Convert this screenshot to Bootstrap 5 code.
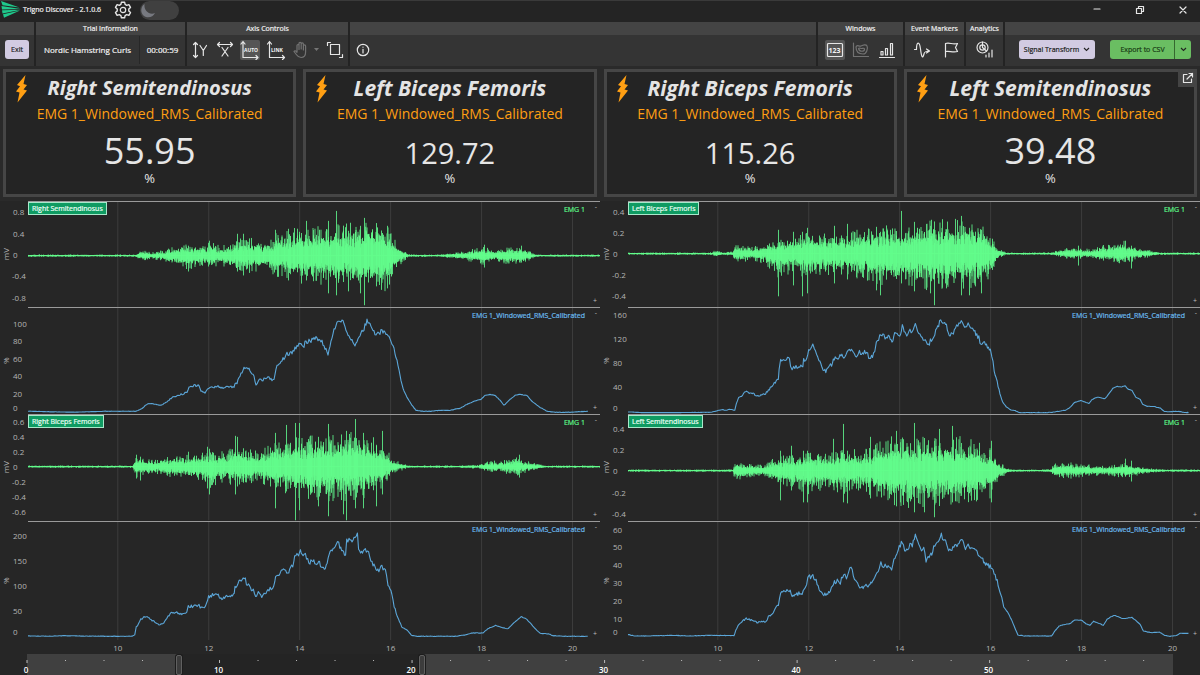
<!DOCTYPE html>
<html lang="en">
<head>
<meta charset="utf-8">
<meta name="viewport" content="width=device-width, initial-scale=1">
<title>Trigno Discover - 2.1.0.6</title>
<link href="https://cdn.jsdelivr.net/npm/bootstrap@5.3.0/dist/css/bootstrap.min.css" rel="stylesheet">
<style>
  body { font-family: "Open Sans", "Noto Sans", sans-serif; font-size: 9px; line-height: 12px; background: #262626; color: #f0f0f0; }
  button, input { font-family: inherit; }
  svg { display: block; }
  .ic { fill: none; stroke: #e6e6e6; stroke-width: 1.2; stroke-linecap: round; stroke-linejoin: round; }
  .ic text { fill: #f4f4f4; stroke: none; font-weight: 700; }
  .faded { opacity: .35; }

  .titlebar { height: 22px; background: #242424; border-top: 1px solid #3a3a3a; padding-bottom: 3px; }
  .app-name { font-size: 7px; margin-left: 2px; margin-right: 13px; -webkit-text-stroke: .2px; }
  .theme-switch { width: 39px; height: 19px; }
  .theme-switch input { appearance: none; width: 39px; height: 19px; margin: 0; border-radius: 10px; background: #404040; display: block; }
  .theme-switch svg { position: absolute; left: 0; top: 1px; pointer-events: none; }
  .win-btns { gap: 33px; margin-right: 12px; }
  .plain { background: none; border: 0; padding: 0; color: inherit; display: flex; align-items: center; justify-content: center; }

  .tool-group { border-right: 2px solid #232323; display: flex; flex-direction: column; height: 44px; background: #343434; flex: none; }
  .tool-group:last-child { border-right: 0; }
  .tool-head { height: 13px; background: #444; font-size: 7px; line-height: 14px; text-align: center; -webkit-text-stroke: .2px; }
  .tool-body { flex: 1; display: flex; align-items: center; padding-bottom: 2px; }
  .g-exit { width: 36px; } .g-trial { width: 151px; } .g-axis { width: 163px; }
  .g-win { width: 87px; } .g-ev { width: 61px; } .g-an { width: 39px; } .g-act { width: 195px; }
  .tool { width: 26px; height: 20px; }
  .lit { background: #555; border-radius: 2px; width: 20px; margin: 0 3px; }
  .btn-soft, .btn-go { font-size: 7px; line-height: 12px; padding: 0; height: 19px; border-radius: 3px; border: 0; color: #1c1c1c; -webkit-text-stroke: .2px; }
  .btn-soft { background: #d2cbe2; }
  .btn-go { background: #6abe62; color: #173a14; }
  .btn-soft svg, .btn-go svg { fill: none; stroke: #222; stroke-width: 1.1; }
  .trial-name { font-size: 8px; width: 104px; border-right: 1px solid #272727; height: 28px; line-height: 28px; text-align: center; white-space: nowrap; -webkit-text-stroke: .2px; }
  .trial-time { font-size: 8px; flex: 1; text-align: center; -webkit-text-stroke: .2px; }

  .cards { padding: 3px 3px 4px; gap: 7px; background: #2a2a2a; }
  .metric { flex: 1 1 0; height: 128px; border: 3px solid #464646; background: #242424; text-align: center; color: #e6e6e6; padding-top: 4px; min-width: 0; }
  .metric .bolt { position: absolute; left: 9px; top: 3px; }
  .metric h2 { font-size: 20px; line-height: 24px; font-weight: 700; font-style: italic; margin: 0; color: #e4e4e4; }
  .metric h2.wide { font-size: 21px; }
  .metric .chan { font-size: 14px; line-height: 24px; height: 24px; color: #ff9f13; padding-top: 2px; }
  .metric .val { font-size: 36px; line-height: 42px; margin-top: 6px; }
  .metric .val.long { font-size: 29px; line-height: 38px; margin-top: 10px; }
  .metric .unit { font-size: 13px; line-height: 12px; }
  .popout { position: absolute; right: -3px; top: -3px; width: 19px; height: 18px; background: #444; }

  .plots { min-height: 430px; }
  .panel { flex: 1 1 0; min-width: 0; display: flex; flex-direction: column; }
  .strip { display: flex; flex-basis: 0; min-height: 0; }
  .r1 { flex-grow: 106; } .r2 { flex-grow: 107; } .r3 { flex-grow: 106; } .r4 { flex-grow: 119; }
  .yaxis { width: 28px; flex: none; }
  .yaxis, .area > svg { height: 100%; }
  .yaxis text, .xaxis text { font-size: 8px; fill: #b5b5b5; }
  .area { flex: 1; min-width: 0; border-top: 1px solid #9a9a9a; }
  .area > svg { width: 100%; position: absolute; inset: 0; }
  .name-tag { position: absolute; left: 0; top: 0; background: #0f9b62; border: 1px solid #a8e8cb; color: #eafff5; font-size: 7px; line-height: 11px; padding: 0 3px; -webkit-text-stroke: .2px; }
  .series { position: absolute; right: 15px; top: 2px; font-size: 7px; line-height: 11px; -webkit-text-stroke: .2px; }
  .s-emg { color: #5cf58a; } .s-rms { color: #6ab9ec; }
  .zm { position: absolute; right: 3px; font-size: 7px; line-height: 8px; color: #bbb; }
  .xaxis { height: 14px; margin-left: 28px; }
  .xaxis svg, .scroller svg { width: 100%; height: 100%; overflow: visible; }

  .scroller { height: 21px; margin: 0 27px; background: #404040; }
  .scroller text { font-size: 8px; fill: #fff; font-weight: 600; }
  .scroller > svg, .scroller input { position: absolute; left: 0; top: 0; }
  .scroller input { appearance: none; width: 100%; height: 100%; margin: 0; background: none; pointer-events: none; }
  .scroller input::-webkit-slider-thumb { appearance: none; width: 6px; height: 20px; background: #3c3c3c; border: 1px solid #606060; border-radius: 2px; pointer-events: auto; box-shadow: 0 0 0 1px #1c1c1c; }
</style>
</head>
<body class="min-vh-100 d-flex flex-column">

<header class="titlebar d-flex align-items-center">
  <svg width="21" height="18" viewBox="0 0 21 18" fill="#1fc98c"><path d="M1 0 19.500 6.500 2.500 4.200zM1.500 5 20.500 8 2 8.500zM2 9.300 21 8.700 2.500 12.500zM3 13.200 20 9.500 4 16.800z"/></svg>
  <span class="app-name">Trigno Discover - 2.1.0.6</span>
  <button class="plain" aria-label="Settings"><svg class="ic" width="18" height="18" viewBox="0 0 18 18"><path stroke-width="1.4" d="M7.4 1.2h3.2l.5 2.2 1.6.9 2.2-.7 1.6 2.8-1.7 1.6v2l1.7 1.6-1.6 2.8-2.2-.7-1.6.9-.5 2.2H7.4l-.5-2.2-1.6-.9-2.2.7-1.6-2.8L3.200 10V8L1.500 6.400l1.600-2.800 2.200.7 1.600-.9z"/><circle cx="9" cy="9" r="2.700"/></svg></button>
  <label class="theme-switch position-relative ms-2"><input type="checkbox" aria-label="Dark theme"><svg width="20" height="17" viewBox="0 0 20 17"><path fill="#777980" d="M4.500 2C0 5 0 13 6 15c3.500 1 7.500-.5 9-4C10 13.500 3.500 9 4.500 2z"/></svg></label>
  <div class="win-btns d-flex ms-auto align-items-center">
    <button class="plain" aria-label="Minimize"><svg class="ic" width="10" height="10"><path d="M2 4h6"/></svg></button>
    <button class="plain" aria-label="Restore"><svg class="ic" width="10" height="10"><path d="M1.500 3.500h5v5h-5zM3.500 3.500v-2h5v5h-2"/></svg></button>
    <button class="plain" aria-label="Close"><svg class="ic" width="10" height="10"><path d="M2 2l6 6M8 2l-6 6"/></svg></button>
  </div>
</header>

<nav class="d-flex" aria-label="Tools">
  <div class="tool-group g-exit"><div class="tool-head"></div><div class="tool-body"><button class="btn btn-soft mx-auto" style="width:24px">Exit</button></div></div>
  <div class="tool-group g-trial"><div class="tool-head">Trial Information</div><div class="tool-body"><span class="trial-name">Nordic Hamstring Curls</span><span class="trial-time">00:00:59</span></div></div>
  <div class="tool-group g-axis"><div class="tool-head">Axis Controls</div><div class="tool-body">
    <button class="plain tool" aria-label="Scale Y"><svg class="ic" width="18" height="18"><path d="M4.500 1.500v15M2.500 3.500l2-2 2 2M2.500 14.500l2 2 2-2M9 4.500l3.300 5L15.500 4.500M12.300 9.500V14.500"/></svg></button>
    <button class="plain tool" aria-label="Scale X"><svg class="ic" width="18" height="18"><path d="M1.500 3.500h15M3.500 1.500l-2 2 2 2M14.500 1.500l2 2-2 2M6 6.500l6 8.500M12 6.500 6 15"/></svg></button>
    <button class="plain tool lit" aria-label="Auto scale"><svg class="ic" width="20" height="20"><path d="M3 2v15.500h15M1 4l2-2.500 2 2.500M16 15.500l2 2-2 2"/><text x="4" y="11.500" font-size="5">AUTO</text></svg></button>
    <button class="plain tool" aria-label="Link axes"><svg class="ic" width="20" height="20"><path d="M3.500 2v15.500h15M1.500 4l2-2.500 2 2.500M16.500 15.500l2 2-2 2"/><text x="5" y="11.500" font-size="5">LINK</text></svg></button>
    <button class="plain tool faded" aria-label="Pan"><svg class="ic" width="16" height="18"><path d="M4 11V4.500a1 1 0 0 1 2 0V8.500M6 8V2.500a1 1 0 0 1 2.200 0V8M8.200 8V3a1 1 0 0 1 2.200 0V9M10.400 9V5a1 1 0 0 1 2.200 0V11c0 3-1.500 5.500-4.500 5.500-2.600 0-3.800-1.500-4.800-3L1 10.500c.5-1 1.800-1 3 .8"/></svg></button>
    <svg class="faded" width="5" height="4"><path fill="#eee" d="M0 0h5L2.500 3z"/></svg>
    <button class="plain tool ms-1" aria-label="Zoom to area"><svg class="ic" width="18" height="18"><path d="M4.500 3.500h9v10h-9zM1.500 4.500v-3h3M16.500 13.500v3h-3"/></svg></button>
  </div></div>
  <div class="tool-group flex-grow-1"><div class="tool-head"></div><div class="tool-body"><button class="plain tool" aria-label="Information"><svg class="ic" width="14" height="14"><circle cx="7" cy="7" r="5.700"/><path d="M7 6.300v3.700M7 4v.2"/></svg></button></div></div>
  <div class="tool-group g-win"><div class="tool-head">Windows</div><div class="tool-body ps-1">
    <button class="plain tool lit" aria-label="Numeric window"><svg class="ic" width="18" height="18"><rect x="1.500" y="2.500" width="15" height="13" rx="1"/><text x="2.500" y="12" font-size="7">123</text></svg></button>
    <button class="plain tool faded" aria-label="Density window"><svg class="ic" width="18" height="18"><path d="M1.500 2v13.500h15M4 6c1-3 3 0 5-1s5-2 6 0 0 8-4 8-7-2-7-7zM6.500 7.500c1-1 2 0 3 0s3-1 3 1-5 3-6-1"/></svg></button>
    <button class="plain tool" aria-label="Bar window"><svg class="ic" width="18" height="18"><path d="M1.500 16.500h15M3 10.500h2v3.500H3zM7.500 7.500h2V14h-2zM12.500 2.500h2V14h-2z"/></svg></button>
  </div></div>
  <div class="tool-group g-ev"><div class="tool-head">Event Markers</div><div class="tool-body ps-1">
    <button class="plain tool" aria-label="Signal marker"><svg class="ic" width="18" height="18"><path d="M1.500 8.500h2C3.500 0 6.500 0 7.500 8S9.500 18.500 11 13c.3-2 1-3 5.500-3M13.500 8l3 2-3 2"/></svg></button>
    <button class="plain tool ms-1" aria-label="Flag marker"><svg class="ic" width="16" height="18"><path d="M2.500 16V2.500c4-1.500 7 1.500 12 0l-2 4 2 4c-5 1.500-8-1-12 0"/></svg></button>
  </div></div>
  <div class="tool-group g-an"><div class="tool-head">Analytics</div><div class="tool-body">
    <button class="plain tool mx-auto" aria-label="Analytics"><svg class="ic" width="20" height="20"><circle cx="7.500" cy="7.500" r="5.500"/><circle cx="7.500" cy="7.500" r="2.700"/><path d="M7.500 2v5.500l4 3.500M11 17v-2M14 17v-4M17 17V10"/></svg></button>
  </div></div>
  <div class="tool-group g-act"><div class="tool-head"></div><div class="tool-body">
    <button class="btn btn-soft d-flex align-items-center justify-content-center gap-1" style="width:76px;margin-left:14px">Signal Transform <svg width="7" height="5"><path d="M1 1l2.500 2.500L6 1"/></svg></button>
    <div class="btn-group" style="margin-left:15px"><button class="btn btn-go" style="width:65px">Export to CSV</button><button class="btn btn-go d-flex align-items-center justify-content-center" style="width:17px;border-left:1px solid #35682f" aria-label="Export options"><svg width="7" height="5"><path d="M1 1l2.500 2.500L6 1"/></svg></button></div>
  </div></div>
</nav>

<section class="cards d-flex" id="cards"></section>

<main class="plots flex-grow-1 d-flex" id="plots"></main>

<footer class="scroller position-relative">
  <svg id="ruler"></svg>
  <input type="range" min="0" max="59.3" step="0.01" value="7.75" aria-label="View start">
  <input type="range" min="0" max="59.3" step="0.01" value="20.4" aria-label="View end">
</footer>

<script>
const METRICS = [["Right Semitendinosus","55.95"],["Left Biceps Femoris","129.72"],["Right Biceps Femoris","115.26"],["Left Semitendinosus","39.48"]];
document.getElementById("cards").innerHTML = METRICS.map(([n, v], i) => `
  <article class="metric position-relative">
    <svg class="bolt" width="13" height="28" viewBox="0 0 13 28" fill="#ff9f13"><path d="M10.500 0 2 10l3 1.200L1 16.500l3.500 1L2.500 27.500 12 15.500 8.500 14.500 12 10 8.500 9z"/></svg>
    <h2 class="${i ? "wide" : ""}">${n}</h2><div class="chan">EMG 1_Windowed_RMS_Calibrated</div>
    <div class="val ${v.length > 5 ? "long" : ""}">${v}</div><div class="unit">%</div>
    ${i === 3 ? '<button class="plain popout" aria-label="Pop out"><svg class="ic" width="12" height="12"><path d="M5 2.500H1.500v8h8V7M7 1.500h3.500V5M10.500 1.500 5 7"/></svg></button>' : ""}
  </article>`).join("");

// Each strip: box = the plot's coordinate window; labels = [text, height on the plot's scale]
const STRIPS = {
  a: [
    {name:"Right Semitendinosus", row:1, box:[28,201,572,106], mid:255, labels:[["0.8",212],["0.4",234],["0",255],["-0.4",276],["-0.8",298]],
     env:"28,1,1 135,1,1 143,5,5 150,3,3 165,5,5 178,9,9 188,10,12 200,9,9 209,12,10 220,9,9 233,12,12 243,16,16 258,14,13 268,12,12 276,20,18 285,20,18 300,26,24 316,24,22 330,30,30 345,28,24 358,28,30 370,32,29 387,26,30 395,14,14 403,5,5 410,1,1 440,1,1 465,4,4 484,8,8 496,4,4 505,7,7 520,8,7 530,4,4 536,1,1 600,1,1",
     spikes:"188,10,16 209,15,9 237,22,16 243,22,20 275,26,14 288,27,25 306,35,25 328,35,38 336,45,40 348,25,36 364,38,50 360,30,38 376,25,30 387,30,33 484,11,12 521,10,6"},
    {row:2, box:[28,307,572,107], labels:[["100",324],["80",341],["60",359],["40",376],["20",394],["0",408]],
     line:"28,411 75,412 105,411 136,411 142,408 148,403 156,404 161,405 166,402 172,397 178,395 184,393 187,392 189,386 194,385 199,385 201,390 205,392 209,387 214,387 219,386 223,388 228,386 233,387 237,382 241,373 245,366 249,369 254,376 256,385 258,380 263,379 268,377 271,379 274,379 276,368 281,361 286,354 290,353 294,350 299,344 304,344 308,340 312,339 316,337 321,340 325,346 328,352 330,343 334,330 338,318 343,321 346,328 350,337 355,343 359,336 363,330 367,320 371,326 376,334 381,331 385,331 389,334 392,343 397,358 401,380 403,388 407,397 412,405 416,410 423,411 430,411 440,410 450,410 460,408 467,404 474,401 481,399 485,395 490,394 495,395 500,400 504,405 510,399 515,395 520,394 527,395 532,401 540,407 547,411 555,412 570,412 588,411"},
    {name:"Right Biceps Femoris", row:3, box:[28,414,572,106], mid:466, labels:[["0.6",422],["0.4",437],["0.2",452],["0",467],["-0.2",482],["-0.4",497],["-0.6",512]],
     env:"28,1,1 133,1,1 135,9,10 145,7,7 155,6,6 170,9,9 185,10,10 200,12,12 210,12,18 225,14,14 235,18,17 255,14,14 270,18,18 280,22,20 295,28,28 310,26,28 328,28,30 345,30,30 360,30,32 378,25,25 388,14,14 392,6,6 400,4,4 408,1,1 460,1,1 480,2,2 486,5,5 500,5,5 518,8,8 530,4,4 540,2,2 545,1,1 600,1,1",
     spikes:"136,12,12 140,10,14 188,15,8 207,20,22 209,18,28 235,31,28 237,30,20 275,34,42 286,42,25 295,44,56 299,44,44 318,26,40 328,43,50 346,36,60 343,20,48 355,48,42 363,34,42 376,22,40 382,36,28 519,12,11"},
    {row:4, box:[73,318,1495,357], labels:[["200",535],["150",560],["100",585],["50",610],["0",631]], top:520, h:119,
     line:"73,662 130,663 170,661 200,662 300,663 345,663 352,658 356,635 362,625 368,612 376,605 385,601 392,610 400,617 410,624 418,629 428,622 436,608 445,595 453,590 465,593 480,596 488,590 492,573 505,572 520,570 526,577 534,580 540,560 545,545 555,537 568,533 575,545 582,548 592,540 605,538 612,532 614,515 622,505 630,492 638,486 644,502 652,515 662,525 668,540 675,530 684,541 690,538 700,525 712,516 718,505 720,484 732,474 738,465 752,468 762,455 768,440 770,415 776,412 780,420 785,408 792,420 798,418 804,435 810,442 815,433 825,442 835,443 840,450 850,456 855,442 860,420 868,400 876,390 882,375 888,392 895,402 903,418 906,375 912,370 920,375 928,362 934,353 937,400 945,412 952,405 960,402 966,420 972,440 980,455 990,465 998,452 1004,460 1010,475 1014,510 1024,535 1030,575 1038,600 1050,635 1065,645 1075,660 1090,663 1190,663 1215,659 1235,653 1262,653 1275,640 1295,630 1312,637 1328,640 1345,620 1362,604 1375,610 1385,622 1400,642 1412,654 1435,656 1445,661 1480,663 1536,663"}
  ],
  b: [
    {name:"Left Biceps Femoris", row:1, box:[628,201,572,106], mid:253, labels:[["0.4",212],["0.2",233],["0",254],["-0.2",275],["-0.4",296]],
     env:"628,1,1 710,1,1 716,3,3 722,1,1 733,2,2 735,9,10 745,7,7 752,6,6 765,9,9 778,14,20 790,14,18 808,18,20 830,17,20 850,19,19 875,24,26 895,24,28 910,26,30 935,30,32 960,30,30 980,26,28 990,18,22 998,5,5 1006,1,1 1050,1,1 1070,6,5 1090,4,4 1110,9,7 1125,11,9 1135,6,6 1150,3,3 1160,1,1 1200,1,1",
     spikes:"778,24,43 793,22,32 802,22,43 807,26,40 834,28,30 847,30,26 876,27,37 880,22,42 901,43,30 914,32,38 930,28,40 934,30,52 955,35,25 961,38,42 969,26,42 981,24,40 1078,8,12 1125,13,8 1131,8,15"},
    {row:2, box:[73,321,1495,321], labels:[["160",315],["120",339],["80",363],["40",387],["0",408]], top:307, h:107,
     line:"73,635 110,637 200,637 290,636 305,632 318,628 330,630 338,627 352,630 356,610 362,592 370,588 378,572 385,575 392,580 400,578 410,588 420,584 430,582 440,570 450,555 458,545 466,535 468,500 472,478 482,476 490,475 495,468 498,495 502,512 506,498 515,498 522,495 530,498 532,478 540,480 543,455 550,440 556,437 560,448 566,455 572,478 577,492 583,505 590,512 597,500 605,492 612,472 622,470 632,466 640,472 646,458 657,446 662,455 670,466 678,455 686,462 694,453 702,468 712,466 718,450 722,430 728,418 734,396 742,405 748,415 756,406 763,424 770,400 776,395 783,410 790,378 797,400 804,405 810,382 816,395 824,372 830,385 836,400 842,415 850,410 858,434 866,415 872,408 880,385 885,372 890,358 896,374 903,368 910,395 918,402 926,390 932,370 938,368 944,353 950,372 958,378 962,370 968,384 975,380 982,402 990,412 996,430 1002,420 1010,436 1020,448 1024,465 1030,510 1038,545 1045,580 1052,605 1062,620 1072,628 1085,631 1095,637 1170,637 1190,635 1215,630 1228,622 1240,606 1256,601 1270,606 1278,609 1285,598 1300,590 1320,595 1330,580 1340,564 1352,558 1362,560 1372,556 1380,566 1390,570 1400,590 1412,598 1418,612 1430,618 1450,619 1465,624 1475,634 1490,634 1510,633 1530,637 1538,637"},
    {name:"Left Semitendinosus", row:3, box:[628,414,572,106], mid:470, labels:[["0.4",429],["0.2",450],["0",471],["-0.2",493],["-0.4",514]],
     env:"628,1,1 733,1,1 735,7,9 745,6,6 765,5,5 775,12,12 790,14,14 808,16,20 825,16,16 840,20,20 860,18,18 875,24,22 895,30,30 915,28,32 935,30,34 955,30,30 975,26,28 990,22,24 998,10,10 1007,2,2 1012,1,1 1050,1,1 1055,6,6 1070,7,7 1085,6,5 1100,4,4 1110,5,5 1125,7,7 1138,4,4 1150,2,2 1165,1,1 1200,1,1",
     spikes:"780,20,30 791,25,20 803,20,32 807,20,32 833,32,16 843,47,32 847,20,33 870,34,28 896,40,36 914,48,42 924,20,42 934,30,47 939,42,20 952,45,32 991,30,32 1125,12,6 1131,10,11"},
    {row:4, box:[73,318,1495,357], labels:[["60",529],["50",546],["40",564],["30",582],["20",600],["10",618],["0",631]], top:520, h:119,
     line:"73,658 90,662 130,662 190,660 230,662 290,660 350,661 355,645 362,628 375,614 382,610 395,614 410,621 425,619 435,618 440,603 450,595 458,580 466,568 472,535 480,525 497,525 502,543 512,537 522,532 528,542 534,515 540,510 543,490 550,482 556,478 562,490 570,505 575,532 585,537 595,535 602,520 610,500 620,496 628,500 634,482 640,478 644,485 650,465 656,458 662,475 668,500 676,512 685,518 695,510 703,514 710,495 718,488 724,470 730,460 734,442 740,453 750,450 758,448 762,460 768,430 776,408 782,395 790,377 796,400 804,405 810,380 816,390 824,352 830,368 836,390 840,402 846,395 852,432 860,425 867,412 872,390 878,378 884,372 892,358 898,375 903,368 908,395 914,405 922,395 930,390 936,385 943,368 950,385 955,400 962,388 970,395 976,405 983,404 990,420 998,430 1005,440 1012,448 1022,455 1030,475 1038,495 1045,530 1050,545 1055,575 1065,590 1075,612 1085,640 1092,659 1110,662 1180,662 1190,645 1200,632 1215,627 1230,624 1240,614 1258,614 1270,625 1280,630 1290,618 1305,624 1315,630 1325,612 1335,604 1345,600 1355,604 1365,610 1390,606 1400,615 1412,628 1420,647 1440,652 1462,650 1475,660 1490,663 1506,661 1515,654 1538,654"}
  ]
};

let seed = 11;
const rnd = () => (seed = (seed * 16807) % 2147483647) / 2147483647;
const parse = s => s.split(" ").map(p => p.split(",").map(Number));
const TICKS = [10, 12, 14, 16, 18, 20];
const tickPos = t => (15.7 + (t - 10) * 7.95).toFixed(2) + "%";

// Muscle-activity burst: many thin vertical strokes inside an amplitude envelope
function emg(s) {
  const env = parse(s.env); let k = 0, core = "", fine = "";
  for (let x = env[0][0]; x < 600 + env[0][0] - 28; x += 0.5) {
    while (k < env.length - 2 && x > env[k + 1][0]) k++;
    const a = env[k], b = env[k + 1], f = (x - a[0]) / (b[0] - a[0]);
    const up = a[1] + (b[1] - a[1]) * f, dn = a[2] + (b[2] - a[2]) * f;
    const amp = () => .28 + .34 * rnd() + .4 * Math.pow(rnd(), 4);
    core += `M${x} ${(s.mid - up * amp()).toFixed(1)}V${(s.mid + dn * amp()).toFixed(1)}`;
    if (rnd() < .3) fine += `M${x} ${(s.mid - up * (.5 + .7 * rnd())).toFixed(1)}V${(s.mid + dn * (.5 + .7 * rnd())).toFixed(1)}`;
  }
  parse(s.spikes).forEach(([x, u, d]) => fine += `M${x}.5 ${s.mid - u}V${s.mid + d}`);
  return `<path d="${fine}" stroke="#56d67c" stroke-width="1"/><path d="${core}" stroke="#62fd8c" stroke-width="0.9"/><path d="M${env[0][0]} ${s.mid}h572" stroke="#62fd8c" stroke-width="1"/>`;
}
// Level curve with fine ripple that grows with the level
function rms(s) {
  const pts = parse(s.line), k = s.box[2] > 1000 ? 2.7 : 1, base = s.box[1] + s.box[3];
  let d = "";
  for (let i = 0; i < pts.length - 1; i++) {
    const [x0, y0] = pts[i], [x1, y1] = pts[i + 1], n = Math.max(1, Math.round((x1 - x0) / k));
    for (let j = 0; j < n; j++) {
      const y = y0 + (y1 - y0) * j / n, r = x0 > s.box[0] + s.box[2] * .65 ? .5 : Math.min(6, (base - y) / (11 * k));
      d += `${d ? "L" : "M"}${(x0 + (x1 - x0) * j / n).toFixed(1)} ${(y + (rnd() - .5) * r * k * .9).toFixed(1)}`;
    }
  }
  return `<path d="${d}L${pts[pts.length - 1]}" stroke="#5ba6d8" stroke-width="1.1" stroke-linejoin="round" vector-effect="non-scaling-stroke"/>`;
}
function strip(s) {
  const top = s.top || s.box[1], h = s.h || s.box[3], pc = y => ((y - top) / h * 100).toFixed(1) + "%";
  const unit = s.name ? "mV" : "%";
  return `<div class="strip r${s.row}">
    <svg class="yaxis">${s.labels.map(([t, y]) => `<text x="${t[0] === "-" ? 12 : 13}" y="${pc(y)}" dy="3">${t}</text>`).join("")}
      <svg x="6" y="50%" overflow="visible"><text transform="rotate(-90)" text-anchor="middle" y="3">${unit}</text></svg></svg>
    <div class="area position-relative">
      <svg>${TICKS.map(t => `<line x1="${tickPos(t)}" x2="${tickPos(t)}" y1="0" y2="100%" stroke="#3d3d3d"/>`).join("")}
        <svg width="100%" height="100%" viewBox="${s.box.join(" ")}" preserveAspectRatio="none" fill="none">${s.name ? emg(s) : rms(s)}</svg></svg>
      ${s.name ? `<span class="name-tag">${s.name}</span>` : ""}
      <span class="series ${s.name ? "s-emg" : "s-rms"}">${s.name ? "EMG 1" : "EMG 1_Windowed_RMS_Calibrated"}</span>
      <span class="zm" style="top:1px">-</span><span class="zm" style="bottom:2px">+</span>
    </div></div>`;
}
document.getElementById("plots").innerHTML = Object.values(STRIPS).map(list => `<section class="panel">${list.map(strip).join("")}
  <div class="xaxis"><svg>${TICKS.map(t => `<text x="${tickPos(t)}" y="11" text-anchor="middle">${t}</text>`).join("")}</svg></div></section>`).join("");

let ruler = `<rect x="13.3%" width="21.2%" height="100%" fill="#242424"/>`;
for (let t = 0; t < 60; t += 2) {
  const x = (t * 1.68).toFixed(2) + "%", big = t % 10 === 0;
  ruler += `<line x1="${x}" x2="${x}" y1="6" y2="${big ? 9 : 7}" stroke="#bbb"/>`;
  if (big) ruler += `<text x="${x}" y="19" dx="-1" text-anchor="middle">${t}</text>`;
}
document.getElementById("ruler").innerHTML = ruler;
</script>
<script src="https://cdn.jsdelivr.net/npm/bootstrap@5.3.0/dist/js/bootstrap.bundle.min.js"></script>
</body>
</html>
